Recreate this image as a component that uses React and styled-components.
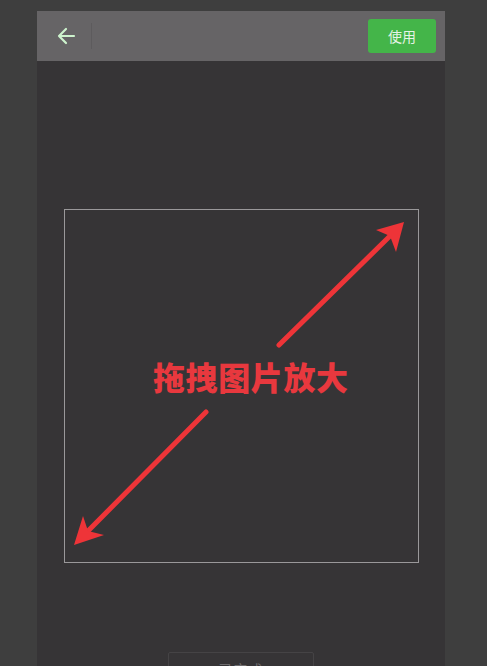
import React from "react";
import styled, { createGlobalStyle } from "styled-components";

const Global = createGlobalStyle`
  html, body { margin: 0; padding: 0; background: #3e3e3e; height: 100%; overflow: hidden; }
  body { font-family: "Noto Sans CJK SC", "Noto Sans", sans-serif; }
`;

const Page = styled.div`
  height: 666px;
  padding: 11px 42px 0 37px;
  box-sizing: border-box;
`;

const Phone = styled.div`
  width: 408px;
  height: 655px;
  background: #363436;
  display: flex;
  flex-direction: column;
  overflow: hidden;
`;

const Header = styled.div`
  height: 50px;
  background: #666466;
  display: flex;
  align-items: center;
  padding: 0 9px 0 18px;
  flex-shrink: 0;
`;

const BackBtn = styled.div`
  width: 22px;
  height: 22px;
  display: flex;
  align-items: center;
  justify-content: center;
`;

const Divider = styled.div`
  width: 1px;
  height: 26px;
  background: #5d5b5d;
  margin-left: 14px;
`;

const Spacer = styled.div`
  flex: 1;
`;

const UseButton = styled.button`
  width: 68px;
  height: 34px;
  border: none;
  border-radius: 3px;
  background: #44b549;
  color: #e6f3e6;
  font-family: "Noto Sans CJK SC", sans-serif;
  font-size: 14px;
  padding: 0;
`;

const Body = styled.div`
  flex: 1;
  display: flex;
  flex-direction: column;
  align-items: center;
  padding-top: 148px;
`;

const CropBox = styled.div`
  position: relative;
  width: 355px;
  height: 354px;
  box-sizing: border-box;
  border: 1px solid #9a989a;
  margin-left: 1px;
`;

const Overlay = styled.svg`
  position: absolute;
  left: -1px;
  top: -1px;
  width: 355px;
  height: 354px;
  overflow: visible;
`;

const Hint = styled.div`
  position: absolute;
  left: 88px;
  top: 150px;
  font-family: "Noto Sans CJK SC", sans-serif;
  font-weight: 900;
  font-size: 32px;
  line-height: 1;
  letter-spacing: 0.6px;
  color: #e8383e;
  white-space: nowrap;
`;

const DoneButton = styled.div`
  margin-top: 89px;
  width: 146px;
  height: 40px;
  box-sizing: border-box;
  border: 1px solid #454345;
  border-radius: 2px;
  display: flex;
  justify-content: center;
  padding-top: 6px;
  font-family: "Noto Sans CJK SC", sans-serif;
  font-size: 14px;
  color: #6e6c6e;
  letter-spacing: 1px;
`;

const RED = "#ee3438";

export default function App() {
  return (
    <>
      <Global />
      <Page>
        <Phone>
          <Header>
            <BackBtn>
              <svg width="20" height="18" viewBox="0 0 20 18">
                <path d="M18 9H3M10 2L3 9L10 16" fill="none" stroke="#cdf3cd" strokeWidth="2.2" strokeLinecap="round" strokeLinejoin="round" />
              </svg>
            </BackBtn>
            <Divider />
            <Spacer />
            <UseButton>使用</UseButton>
          </Header>
          <Body>
            <CropBox>
              <Overlay viewBox="0 0 355 354">
                <line x1="215" y1="136" x2="326" y2="27" stroke={RED} strokeWidth="5" strokeLinecap="round" />
                <polygon points="340,13 312,21 326,27 332,43" fill={RED} />
                <line x1="142" y1="203" x2="24" y2="322" stroke={RED} strokeWidth="5" strokeLinecap="round" />
                <polygon points="10,336 19,307 24,322 40,326" fill={RED} />
              </Overlay>
              <Hint>拖拽图片放大</Hint>
            </CropBox>
            <DoneButton>已完成</DoneButton>
          </Body>
        </Phone>
      </Page>
    </>
  );
}
